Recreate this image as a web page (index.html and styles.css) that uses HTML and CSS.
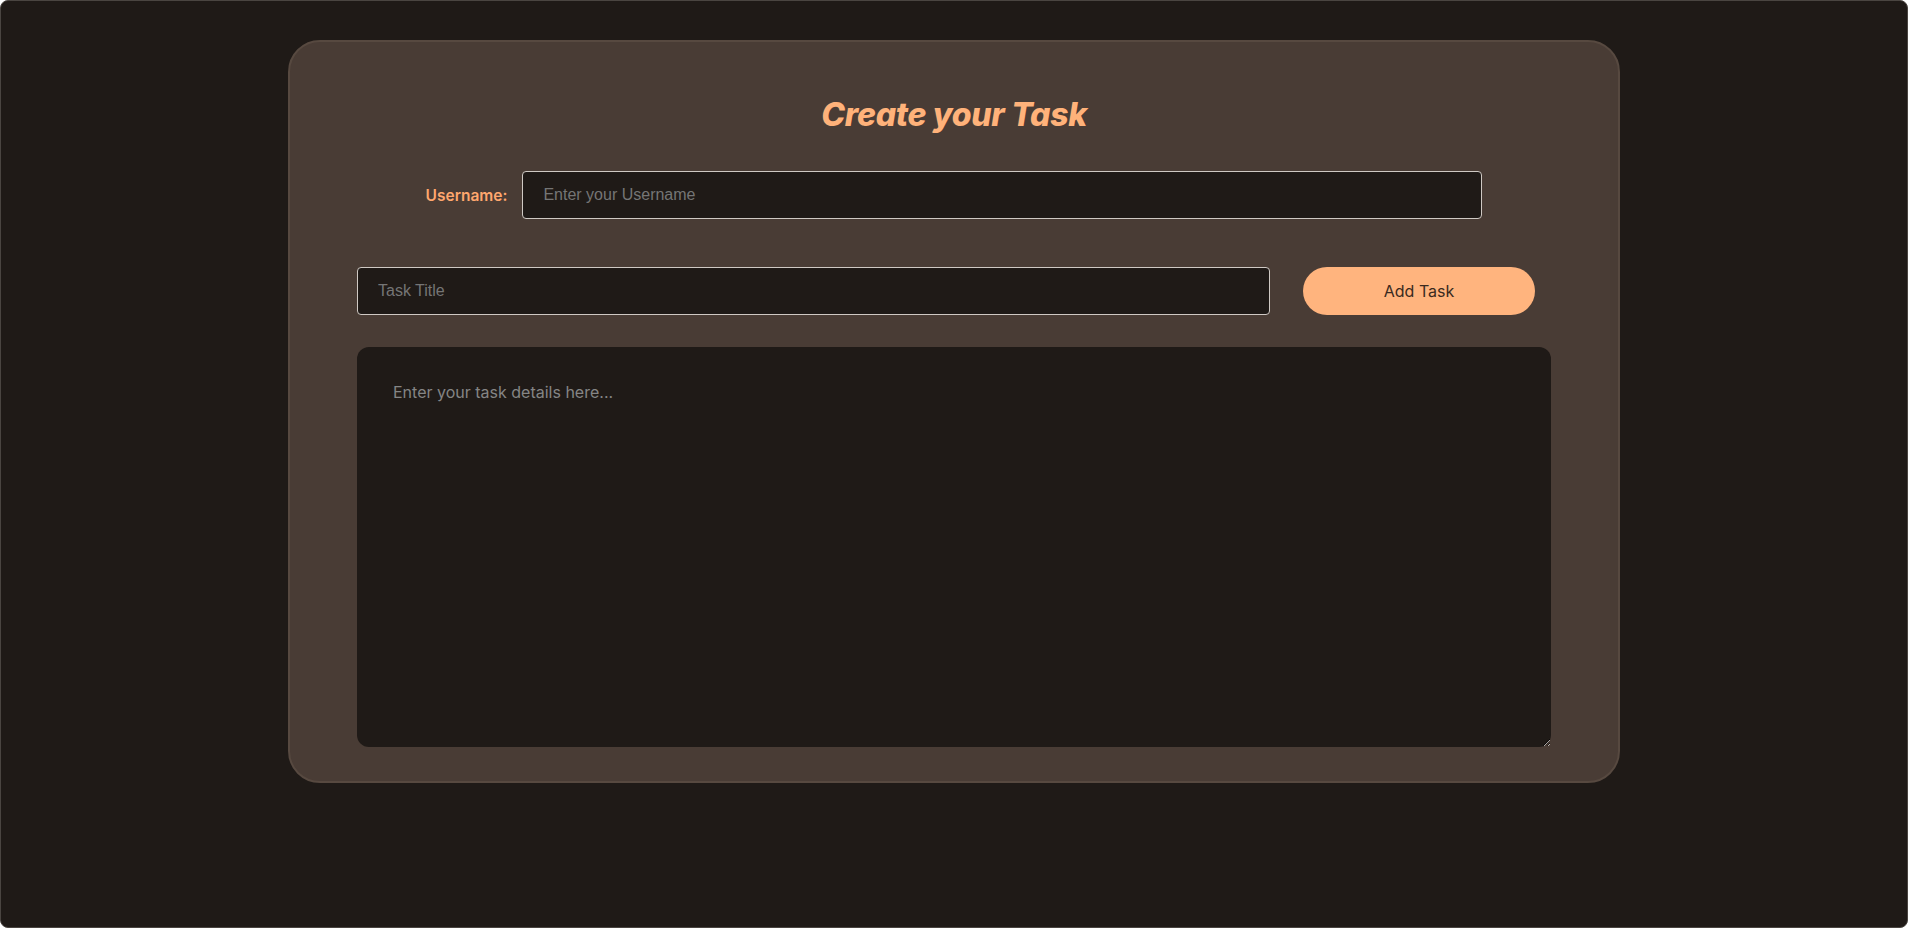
FILE: index.html
```html
<!DOCTYPE html>
<html lang="en">
<head>
<meta charset="utf-8">
<title>Create your Task</title>
<link rel="stylesheet" href="styles.css">
</head>
<body>
<div class="frame">
  <div class="card">
    <h1 class="title">Create your Task</h1>
    <div class="user-row">
      <label class="user-label" for="username">Username:</label>
      <input class="field user-input" id="username" type="text" placeholder="Enter your Username">
    </div>
    <div class="task-row">
      <input class="field task-input" type="text" placeholder="Task Title">
      <button class="add-btn" type="button">Add Task</button>
    </div>
    <textarea class="details" placeholder="Enter your task details here..."></textarea>
  </div>
</div>
</body>
</html>
```

FILE: styles.css
```css
html {
  background: #ffffff;
}
body {
  margin: 0;
  font-family: Inter, "Liberation Sans", sans-serif;
}
.frame {
  width: 1908px;
  height: 928px;
  box-sizing: border-box;
  background: #1f1a17;
  border: 1px solid #4a4541;
  border-radius: 8px;
  padding-top: 39px;
  display: flex;
  flex-direction: column;
  align-items: center;
}
.card {
  width: 1332px;
  box-sizing: border-box;
  background: #493c35;
  border: 2px solid #574940;
  border-radius: 32px;
  padding: 32px 67px 34px;
  display: flex;
  flex-direction: column;
}
.title {
  margin: 22px 0 38px;
  text-align: center;
  font-family: Inter, "Liberation Sans", sans-serif;
  font-size: 32px;
  font-weight: 800;
  font-style: italic;
  letter-spacing: -0.3px;
  color: #ffb27a;
  line-height: 37px;
}
.user-row {
  display: flex;
  justify-content: center;
  align-items: center;
  gap: 15px;
}
.user-label {
  font-family: Inter, "Liberation Sans", sans-serif;
  font-size: 15.5px;
  font-weight: 600;
  color: #ffa76e;
}
.field {
  height: 48px;
  box-sizing: border-box;
  background: #1f1a17;
  border: 1px solid #cfc9c4;
  border-radius: 4px;
  padding: 0 20px;
  font-family: "Liberation Sans", Arial, sans-serif;
  font-size: 16px;
  color: #e8e2dc;
  outline: none;
}
.field::placeholder {
  color: #757575;
}
.user-input {
  width: 960px;
}
.task-row {
  margin-top: 48px;
  display: flex;
  align-items: center;
  gap: 33px;
  padding-right: 16px;
}
.task-input {
  flex: 1;
  min-width: 0;
}
.add-btn {
  width: 232px;
  height: 48px;
  border: none;
  border-radius: 24px;
  background: #ffb47e;
  color: #3a2a20;
  font-family: Inter, "Liberation Sans", sans-serif;
  font-size: 16px;
  cursor: pointer;
}
.details {
  margin-top: 32px;
  width: 100%;
  height: 400px;
  box-sizing: border-box;
  display: block;
  background: #1f1a17;
  border: none;
  border-radius: 12px;
  padding: 35px 36px;
  font-family: Inter, "Liberation Sans", sans-serif;
  font-size: 16px;
  color: #e8e2dc;
  outline: none;
}
.details::placeholder {
  color: #858585;
}
```
